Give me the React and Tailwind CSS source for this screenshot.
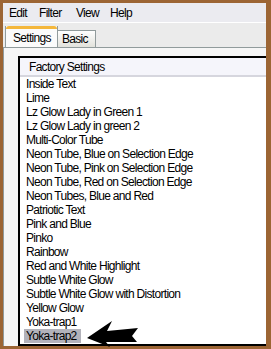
import React from 'react';

const items = [
    'Inside Text',
    'Lime',
    'Lz Glow Lady in Green 1',
    'Lz Glow Lady in green 2',
    'Multi-Color Tube',
    'Neon Tube, Blue on Selection Edge',
    'Neon Tube, Pink on Selection Edge',
    'Neon Tube, Red on Selection Edge',
    'Neon Tubes, Blue and Red',
    'Patriotic Text',
    'Pink and Blue',
    'Pinko',
    'Rainbow',
    'Red and White Highlight',
    'Subtle White Glow',
    'Subtle White Glow with Distortion',
    'Yellow Glow',
    'Yoka-trap1',
    'Yoka-trap2',
];

function Arrow() {
    return (
        <svg className="absolute left-[84px] top-[318px]" width="56" height="30" viewBox="0 0 56 30">
            <polygon
                points="3,20 28,3 23,13 54,10 48,18 53,24 22,24 26,29"
                fill="#000"
            />
        </svg>
    );
}

export default function App() {
    return (
        <div
            className="relative flex h-[349px] w-[271px] flex-col overflow-hidden bg-[#9c6534] pb-[3px] pl-[3px] pr-[5px] pt-[3px] text-[12px] tracking-[-0.7px] text-black"
            style={{ fontFamily: '"Liberation Sans", Arial, sans-serif' }}
        >
            <div className="flex flex-1 flex-col overflow-hidden bg-[#ebebeb]">
                <div className="flex h-[19px] items-center bg-[#ebebf0] pl-[6px]">
                    <span className="w-[30px]">Edit</span>
                    <span className="w-[37px]">Filter</span>
                    <span className="w-[34px]">View</span>
                    <span>Help</span>
                </div>
                <div className="h-px bg-white" />
                <div className="flex h-[24px] items-end bg-[#ebebeb] pl-[2px]">
                    <div className="flex h-[21px] w-[53px] flex-col border-l border-r border-[#919b9c] bg-[#fbfbfb]">
                        <div className="h-[3px] rounded-t-[3px] bg-[#f4b73c]" />
                        <div className="pl-[7px]">Settings</div>
                    </div>
                    <div className="flex h-[17px] w-[38px] items-center border-r border-t border-[#919b9c] bg-gradient-to-b from-[#ffffff] to-[#e2e2dc] pl-[4px]">
                        Basic
                    </div>
                </div>
                <div className="flex flex-1 flex-col border-l border-t border-[#919b9c] bg-[#f6f6f6] pl-[14px] pt-[8px]">
                    <div className="flex flex-1 flex-col border-l-2 border-t-2 border-black bg-white">
                        <div className="flex h-[19px] items-center border-b-2 border-[#d6d6de] bg-[#f5f5fb] pl-[9px]">
                            Factory Settings
                        </div>
                        <div className="flex flex-col pl-[4px]">
                            {items.map((item, i) => (
                                <div key={item} className="flex h-[14px] items-center">
                                    <span
                                        className={
                                            i === items.length - 1
                                                ? 'bg-[#b2b2ba] pl-[2px] pr-[4px] leading-[14px]'
                                                : 'pl-[2px] leading-[14px]'
                                        }
                                    >
                                        {item}
                                    </span>
                                </div>
                            ))}
                        </div>
                        <div className="flex-1" />
                        <div className="h-[2px] bg-black" />
                    </div>
                </div>
            </div>
            <Arrow />
        </div>
    );
}
